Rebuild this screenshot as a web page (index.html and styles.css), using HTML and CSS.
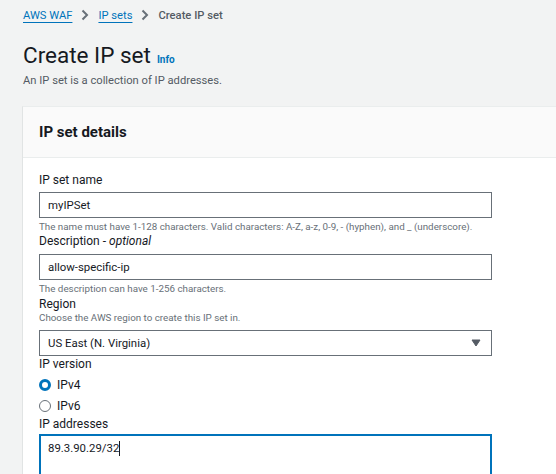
FILE: index.html
```html
<!DOCTYPE html>
<html>
<head>
<meta charset="utf-8">
<link rel="stylesheet" href="styles.css">
</head>
<body>
<div class="page">
  <nav class="crumbs">
    <a class="crumb-link">AWS WAF</a>
    <span class="sep"><svg width="8" height="12" viewBox="0 0 8 12"><path d="M1.5 1.5 L6 6 L1.5 10.5" fill="none" stroke="#687078" stroke-width="2"/></svg></span>
    <a class="crumb-link">IP sets</a>
    <span class="sep"><svg width="8" height="12" viewBox="0 0 8 12"><path d="M1.5 1.5 L6 6 L1.5 10.5" fill="none" stroke="#687078" stroke-width="2"/></svg></span>
    <span class="crumb-current">Create IP set</span>
  </nav>
  <h1 class="title"><span class="title-text">Create IP set</span><span class="info">Info</span></h1>
  <p class="subtitle">An IP set is a collection of IP addresses.</p>

  <section class="card">
    <header class="card-head"><h2>IP set details</h2></header>
    <div class="card-body">
      <div class="field f-name">
        <label class="label">IP set name</label>
        <div class="input">myIPSet</div>
        <div class="hint">The name must have 1-128 characters. Valid characters: A-Z, a-z, 0-9, - (hyphen), and _ (underscore).</div>
      </div>
      <div class="field f-desc">
        <label class="label">Description - <i>optional</i></label>
        <div class="input">allow-specific-ip</div>
        <div class="hint">The description can have 1-256 characters.</div>
      </div>
      <div class="field f-region">
        <label class="label">Region</label>
        <div class="hint desc">Choose the AWS region to create this IP set in.</div>
        <div class="input select">US East (N. Virginia)<svg class="caret" width="10" height="8" viewBox="0 0 10 8"><path d="M1 1 H9 L5 7 Z" fill="#545b64" stroke="#545b64" stroke-width="1" stroke-linejoin="round"/></svg></div>
      </div>
      <div class="field f-ver">
        <label class="label">IP version</label>
        <div class="radios">
          <div class="radio"><span class="dot on"></span>IPv4</div>
          <div class="radio"><span class="dot"></span>IPv6</div>
        </div>
      </div>
      <div class="field f-addr">
        <label class="label">IP addresses</label>
        <div class="textarea">89.3.90.29/32<span class="cursor"></span></div>
      </div>
    </div>
  </section>
</div>
</body>
</html>
```

FILE: styles.css
```css
* { box-sizing: border-box; }
html, body { margin: 0; padding: 0; }
body {
  background: #f2f3f3;
  font-family: Roboto, "Noto Sans", sans-serif;
  color: #16191f;
  overflow: hidden;
  height: 474px;
}
.page {
  padding: 5px 0 0 23px;
}
.crumbs {
  display: flex;
  align-items: center;
  font-size: 11.2px;
  height: 20px;
}
.crumb-link {
  color: #0073bb;
  text-decoration: underline;
  text-underline-offset: 3px;
}
.sep {
  display: inline-flex;
  padding: 0 9px 0 9px;
}
.crumb-current { color: #545b64; font-weight: 500; }
.title {
  margin: 14px 0 0;
  height: 32px;
  font-weight: 400;
  display: flex;
  align-items: baseline;
}
.title-text {
  font-size: 22.5px;
  line-height: 32px;
}
.info {
  font-size: 10px;
  line-height: 1;
  font-weight: 700;
  color: #0073bb;
  margin-left: 6px;
}
.subtitle {
  margin: 2px 0 0;
  font-size: 11.2px;
  color: #545b64;
  line-height: 16px;
}
.card {
  margin: 17px 0 0 -1px;
  background: #fff;
  border-left: 1px solid #e1e4e4;
  border-top: 1px solid #eaeded;
  width: 560px;
}
.card-head {
  background: #fafafa;
  border-bottom: 1px solid #eaeded;
  height: 51px;
  display: flex;
  align-items: center;
  padding-left: 16px;
}
.card-head h2 {
  margin: 0;
  font-size: 15px;
  font-weight: 700;
}
.card-body {
  padding: 14px 0 0 16px;
}
.field { display: flex; flex-direction: column; }
.label {
  font-size: 12px;
  line-height: 16px;
  margin-bottom: 4px;
}
.f-desc .label { margin-bottom: 5px; }
.input {
  width: 453px;
  height: 26px;
  border: 1px solid #687078;
  font-size: 11.4px;
  padding: 0 8px;
  display: flex;
  align-items: center;
}
.hint {
  font-size: 9.8px;
  color: #687078;
  line-height: 12px;
  margin-top: 3px;
}
.f-region .label { margin-bottom: 0; margin-top: 1px; }
.hint.desc { margin-top: 0; margin-bottom: 6px; }
.select {
  justify-content: space-between;
}
.caret { margin-right: 2px; }
.f-ver .label { margin-bottom: 2px; }
.radios { display: flex; flex-direction: column; }
.radio {
  display: flex;
  align-items: center;
  font-size: 12px;
  height: 21px;
}
.dot {
  width: 12px;
  height: 12px;
  border-radius: 50%;
  border: 1px solid #687078;
  margin-right: 6px;
  background: #fff;
}
.dot.on {
  border: 3.5px solid #0073bb;
}
.f-addr .label { margin-bottom: 2px; }
.textarea {
  width: 453px;
  height: 60px;
  border: 2px solid #0073bb;
  font-size: 11.4px;
  padding: 5px 7px;
  display: flex;
  align-items: flex-start;
}
.cursor {
  display: inline-block;
  width: 1px;
  height: 15px;
  background: #16191f;
}
```
